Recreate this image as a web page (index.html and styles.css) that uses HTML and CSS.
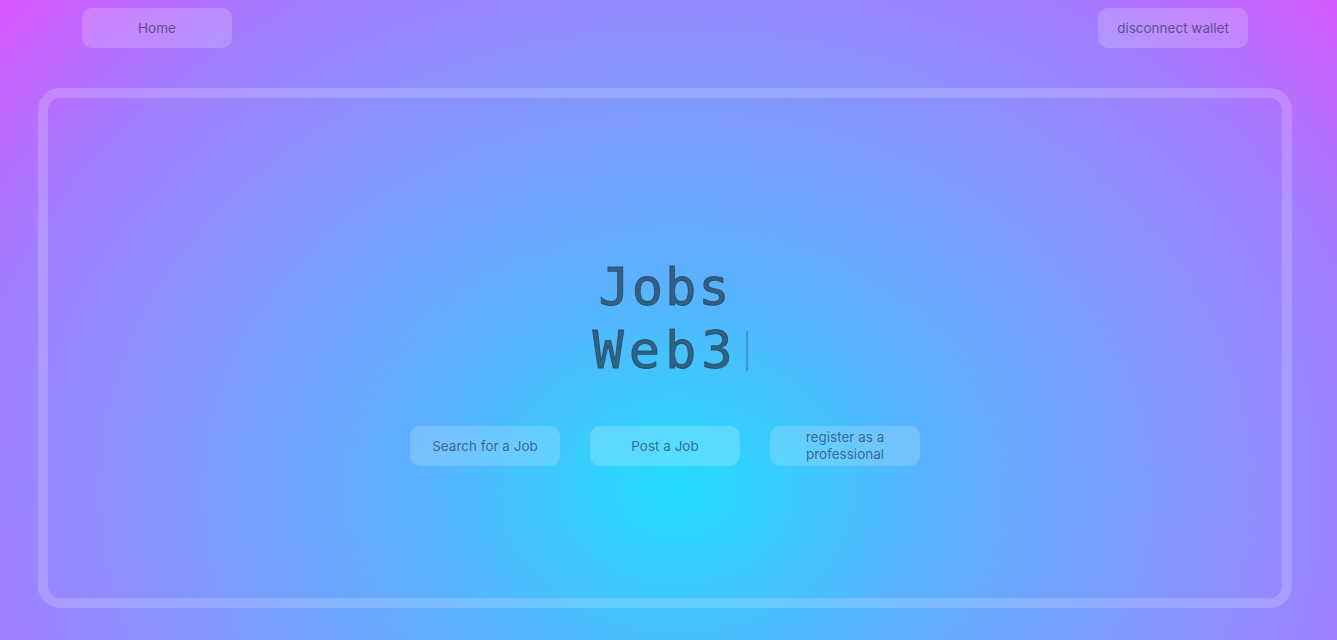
FILE: index.html
```html
<!DOCTYPE html>
<html>
<head>
<meta charset="utf-8">
<title>Jobs Web3</title>
<link rel="stylesheet" href="styles.css">
</head>
<body>
<div class="page">
  <nav class="nav">
    <button class="btn">Home</button>
    <button class="btn">disconnect wallet</button>
  </nav>
  <main class="frame">
    <h1 class="title">
      <span class="line">Jobs</span>
      <span class="line line-2">Web3<span class="cursor"></span></span>
    </h1>
    <div class="actions">
      <button class="btn">Search for a Job</button>
      <button class="btn btn-strong">Post a Job</button>
      <button class="btn">register as a professional</button>
    </div>
  </main>
</div>
</body>
</html>
```
FILE: styles.css
```css
html, body {
  margin: 0;
  height: 100%;
}
body {
  background: radial-gradient(ellipse 900px 720px at 677px 490px, #22ddff 0%, #5cb0ff 30%, #8a92ff 60%, #a47cff 80%, #d558ff 100%);
  background-color: #d558ff;
  font-family: "Inter", "Noto Sans", sans-serif;
  overflow: hidden;
}
.page {
  width: 1337px;
  height: 640px;
  display: flex;
  flex-direction: column;
}
.nav {
  display: flex;
  justify-content: space-between;
  padding: 8px 89px 0 82px;
}
.btn {
  width: 150px;
  height: 40px;
  border: none;
  border-radius: 10px;
  background: rgba(255, 255, 255, 0.18);
  color: rgba(25, 35, 70, 0.62);
  font-family: "Inter", "Noto Sans", sans-serif;
  font-size: 13.5px;
  line-height: 17px;
  padding: 0 10px;
  cursor: pointer;
}
.btn-strong {
  background: rgba(255, 255, 255, 0.2);
}
.frame {
  box-sizing: border-box;
  width: 1254px;
  height: 520px;
  margin: 40px 0 0 38px;
  border: 10px solid rgba(255, 255, 255, 0.18);
  border-radius: 22px;
  display: flex;
  flex-direction: column;
  align-items: center;
  padding-top: 158px;
}
.title {
  margin: 0;
  display: flex;
  flex-direction: column;
  align-items: center;
  font-family: "DejaVu Sans Mono", monospace;
  font-weight: normal;
  font-size: 52px;
  line-height: 63px;
  letter-spacing: 2px;
  color: rgba(35, 60, 80, 0.7);
  -webkit-text-stroke: 0.9px rgba(35, 60, 80, 0.7);
}
.line {
  display: flex;
  align-items: center;
}
.line-2 {
  letter-spacing: 5px;
  margin-left: 10px;
}
.cursor {
  display: inline-block;
  width: 2px;
  height: 40px;
  margin-left: 8px;
  background: rgba(35, 60, 80, 0.3);
}
.actions {
  display: flex;
  gap: 30px;
  margin-top: 44px;
}
```
